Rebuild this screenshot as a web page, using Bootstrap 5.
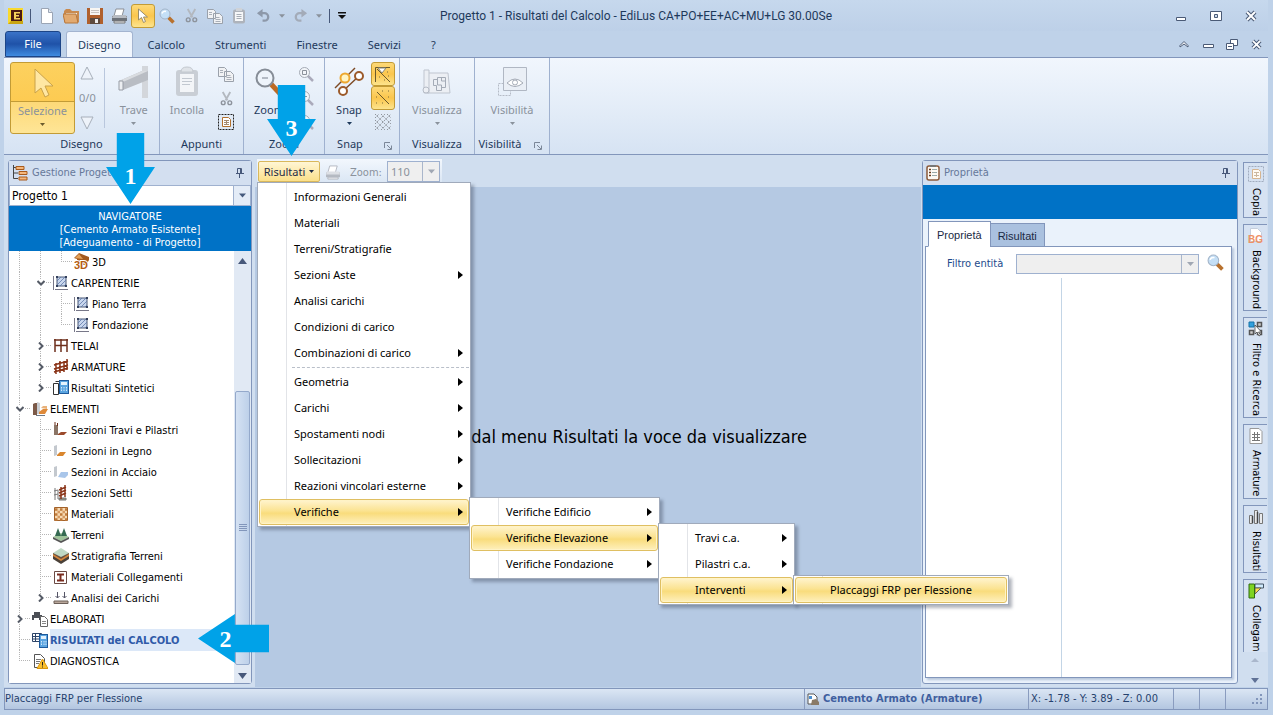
<!DOCTYPE html>
<html lang="it">
<head>
<meta charset="utf-8">
<meta name="viewport" content="width=device-width, initial-scale=1">
<title>Progetto 1 - Risultati del Calcolo - EdiLus</title>
<link rel="stylesheet" href="https://cdn.jsdelivr.net/npm/bootstrap@5.3.0/dist/css/bootstrap.min.css">
<style>
  :root { --line:#8296bb; --blue:#0072c6; --call:#00a2e8; --ink:#1e395b; --tahoma:"DejaVu Sans Condensed","DejaVu Sans",sans-serif; }
  body { font:11px/16px "Noto Sans",sans-serif; color:var(--ink); background:#bfd2e9; padding:0 5px 5px 4px; }
  button, select, input { font:inherit; color:inherit; }
  svg { display:block; flex:none; }
  .plain { border:0; background:none; padding:0; display:flex; align-items:center; justify-content:center; }
  .off { color:#8a929c; }
  .tah { font-family:var(--tahoma); }
  .titlebar, .tabrow, .ribbon, .status { flex:none; }

  .titlebar { display:grid; grid-template-columns:1fr auto 1fr; align-items:center; height:31px; background:linear-gradient(#c6d8ed,#bdd0e8); }
  .titlebar h1 { font:12px/16px Roboto,sans-serif; margin:0; }
  .qat .plain { width:24px; height:24px; }
  .qat .narrow { width:13px; }
  .gold { background:linear-gradient(#fdd978,#fbc64d 50%,#fde48d)!important; border:1px solid #c29b36!important; border-radius:3px; }
  .vbar { width:1px; height:14px; background:#46587a; }
  .winbtn .plain { width:35px; height:24px; }

  .tabrow { height:26px; }
  .tabrow .nav-link { color:var(--ink); padding:6px 15px 4px; line-height:16px; border-radius:3px 3px 0 0; }
  .tabrow .filetab { color:#fff; background:linear-gradient(#3a73c8,#1f52a8 50%,#3f8be0); border:1px solid #1c4587; padding:4px 0; width:56px; height:26px; margin:0 5px 0 1px; }
  .tabrow .current { background:#f1f6fd; border:1px solid #a3b4d0; border-bottom:0; padding:5px 11px; height:27px; }
  .mdi .plain { width:24px; height:20px; }

  .ribbon { height:98px; border:1px solid var(--line); border-width:1px 0; background:linear-gradient(#f1f6fd,#e4edf8 50%,#d6e3f3); }
  .rgroup { border-right:1px solid #9fb1cf; position:relative; display:flex; flex-direction:column; }
  .rbody { height:76px; display:flex; padding-top:4px; }
  .rname { text-align:center; line-height:16px; padding-top:2px; }
  .g-draw { width:156px; } .g-clip { width:84px; } .g-zoom { width:81px; } .g-std { width:75px; }
  .g-draw .rbody { padding-left:6px; }
  .launch .rname { padding-right:24px; }
  .launch .corner { position:absolute; right:7px; bottom:4px; }
  .big { border:0; background:none; padding:0; display:flex; flex-direction:column; align-items:center; width:58px; height:72px; }
  .g-clip .big { width:54px; }
  .g-zoom .big { width:50px; }
  .big svg.pic { margin:4px 0; }
  .split { width:65px; flex:none; padding:0; background:linear-gradient(#fcd15f,#fdcb52 38px,#c29b36 38px,#c29b36 39px,#fdd978 39px,#fee596)!important; }
  .small3 { display:flex; flex-direction:column; width:24px; }
  .small3 .plain { width:24px; height:24px; }
  .rsep { width:1px; height:60px; margin:6px 4px; background:#b9c7dd; }

  .workspace { background:#d0deef; min-height:0; }
  .pane { border:1px solid var(--line); border-radius:3px; background:#eaf2fb; display:flex; flex-direction:column; }
  .pane-left { width:244px; margin:5px 3px 3px 4px; }
  .pane-right { width:316px; margin:5px 5px 3px 1px; }
  .panehead { height:24px; background:#d3dff0; color:#66789a; padding:0 7px 0 3px; position:relative; display:flex; align-items:center; gap:4px; font-family:var(--tahoma); }
  .combo { appearance:none; border:1px solid #9fb1cf; border-radius:0; background:#fff url("data:image/svg+xml,%3Csvg xmlns='http://www.w3.org/2000/svg' width='17' height='22'%3E%3Cpath fill='%23e4ecf7' d='M0 0h17v22H0z'/%3E%3Cpath stroke='%239fb1cf' d='M.5 0v22'/%3E%3Cpath fill='%23465a7d' d='M6 9h7l-3.500 4z'/%3E%3C/svg%3E") right center no-repeat; }
  .combo.dim { background-image:url("data:image/svg+xml,%3Csvg xmlns='http://www.w3.org/2000/svg' width='17' height='22'%3E%3Cpath stroke='%23a9b6cb' d='M.5 0v22'/%3E%3Cpath fill='%23a0a7b3' d='M6 9h7l-3.500 4z'/%3E%3C/svg%3E"); background-color:#efefef; opacity:1; color:#8a929c; }
  .combo-project { height:21px; width:100%; font:12px/18px var(--tahoma); color:#000; padding:0 20px 0 2px; }
  .navhead { background:var(--blue); color:#fff; text-align:center; line-height:13px; padding:4px 0 2px; font-family:var(--tahoma); }
  .banner { background:var(--blue); height:34px; flex:none; }

  .tree { background:#fff; color:#000; font-family:var(--tahoma); }
  .tree .rowline { display:flex; align-items:center; height:21px; white-space:nowrap; color:#000; text-decoration:none; }
  .tree .rowline i { width:21px; height:21px; flex:none; display:flex; align-items:center; justify-content:center; --d:#b5b5b5; }
  .tree .v { background:repeating-linear-gradient(var(--d) 0 1px,#fff 1px 2px) 10px 0/1px 100% no-repeat; }
  .tree .t { background:repeating-linear-gradient(var(--d) 0 1px,#fff 1px 2px) 10px 0/1px 100% no-repeat, repeating-linear-gradient(90deg,var(--d) 0 1px,#fff 1px 2px) 10px 10px/11px 1px no-repeat; }
  .tree .l { background:repeating-linear-gradient(var(--d) 0 1px,#fff 1px 2px) 10px 0/1px 10px no-repeat, repeating-linear-gradient(90deg,var(--d) 0 1px,#fff 1px 2px) 10px 10px/11px 1px no-repeat; }
  .tree .rowline > svg { margin:0 2px; }
  .tree .rowline .chev { background:#fff; }
  .tree .rowline span { line-height:21px; padding-top:1px; }
  .tree .chosen { font-weight:700; color:#2f5aa8; }
  .tree .chosen span { background:#dce8f8; flex:1; }
  .sbar { width:17px; background:#e1e9f4; display:flex; flex-direction:column; align-items:center; padding:3px 0 4px; }
  .sbar .thumb { width:15px; height:274px; margin-top:auto; border:1px solid #94a9cb; border-radius:2px; background:linear-gradient(90deg,#d5e2f3,#bdd0e9); display:flex; align-items:center; justify-content:center; }

  .toolstrip { height:32px; padding:4px 0 0 2px; }
  .toolstrip .inner { background:linear-gradient(#f2f7fd,#dae6f4); height:24px; padding:2px 2px 0 1px; width:185px; gap:5px; }
  .btn-results { width:62px; height:21px; border:1px solid #d9b85c; border-radius:2px; background:linear-gradient(#fff6d5,#fbe08a); color:#1e2b45; display:flex; align-items:center; justify-content:center; gap:4px; padding:0; }
  .combo-zoom { width:53px; height:21px; padding:0 18px 0 3px; }
  .canvas { background:#b5c9e3; color:#000; font:18px/24px var(--tahoma); padding-right:114px; }

  .dropdown-menu.flyout { --bs-dropdown-item-padding-y:0; font-size:11px; color:#000; min-width:0; width:214px; padding:1px; border:1px solid #a0aabb; border-radius:0; box-shadow:3px 3px 3px rgba(60,70,90,.4); margin:0; background:linear-gradient(#e2e4e8,#e2e4e8) 28px 0/1px 100% no-repeat #fff; }
  .dropdown-menu.menu-main { top:21px; left:-1px; }
  .flyout .dropdown-item { display:flex; align-items:center; justify-content:space-between; height:26px; padding:0 6px 0 35px; color:#000; background:none; border-radius:3px; line-height:16px; }
  .flyout .dropdown-item.hot { border:1px solid #dfbf62; padding:0 5px 0 34px; background:linear-gradient(#fff4cf,#fbe391 45%,#f9dc7c 55%,#fef0bd); box-shadow:inset 0 0 0 1px #fff3c6; }
  .flyout .flyout { top:-2px; left:210px; width:191px; }
  .flyout .flyout .flyout { left:187px; width:137px; }
  .flyout .flyout .flyout .flyout { left:133px; width:216px; }
  .flyout hr { margin:1px 0 1px 33px; border-top:1px dashed #b9bfc9; opacity:1; }

  .ptabs { padding:2px 0 0 6px; margin-bottom:-1px; position:relative; height:28px; align-items:flex-end; font-family:"Liberation Sans",sans-serif; }
  .ptabs .nav-link { border:1px solid var(--line); border-radius:0; color:#1b2a44; padding:3px 7px; height:24px; background:#aac1df; line-height:18px; margin-left:-1px; }
  .ptabs .active { height:26px; background:#fff; border-bottom-color:#fff; padding:4px 8px; }
  .psheet { background:#fff; border:1px solid var(--line); margin:0 5px 5px 2px; color:#1d4a8c; font-family:var(--tahoma); box-shadow:2px 2px 2px #b9c7dc; }
  .combo-filter { height:20px; min-width:0; }
  .filterrow { padding:7px 7px 4px 21px; height:31px; }
  .filterrow label { line-height:20px; margin-right:13px; }
  .psplit { width:136px; border-right:1px solid #c3d5e6; }

  .side { width:24px; gap:6px; margin-right:1px; padding-top:7px; font-family:var(--tahoma); color:#000; }
  .side .stab { writing-mode:vertical-rl; white-space:nowrap; border:1px solid var(--line); border-right:0; background:#d6e2f2; padding:3px 0 1px; display:flex; align-items:center; gap:6px; width:24px; line-height:16px; color:#000; }
  .side .stab svg { writing-mode:horizontal-tb; }

  .status { height:22px; margin-top:1px; border:1px solid var(--line); background:linear-gradient(#dbe6f4,#b3c6e0); color:#26426e; font-family:var(--tahoma); }
  .status .cell { border-left:1px solid #8a9cbf; height:20px; display:flex; align-items:center; padding-left:2px; }
  .cell-mode { width:224px; color:#3f5f9f; } .cell-pos { width:145px; } .cell-x { width:26px; } .cell-grip { width:42px; }

  .callout { position:absolute; z-index:1100; background:var(--call); color:#fff; font:700 24px/24px "Liberation Serif",serif; display:flex; align-items:center; justify-content:center; pointer-events:none; }
  .callout.down { width:49px; height:71px; padding-top:14px; clip-path:polygon(22% 0,78% 0,78% 48%,100% 48%,50% 100%,0 48%,22% 48%); }
  .callout.left { width:71px; height:49px; padding-right:16px; clip-path:polygon(0 50%,52% 0,52% 22%,100% 22%,100% 78%,52% 78%,52% 100%); }
  .call-1 { left:97px; top:-28px; }
  .call-2 { left:189px; top:-15px; }
  .call-3 { left:9px; top:-76px; }
</style>
<script src="https://cdn.jsdelivr.net/npm/bootstrap@5.3.0/dist/js/bootstrap.bundle.min.js"></script>
</head>
<body class="d-flex flex-column vh-100">

<svg width="0" height="0" class="position-absolute" aria-hidden="true">
  <symbol id="caret" viewBox="0 0 7 4"><path d="M0 0h7L3.500 4z" fill="currentColor"/></symbol>
  <symbol id="right" viewBox="0 0 5 8"><path d="M0 0l5 4-5 4z" fill="#000"/></symbol>
  <symbol id="pin" viewBox="0 0 8 10"><path d="M1.500 .5h4v5h-4zM4.500 1v4M0 5.500h8M3.500 6v4" fill="none" stroke="#47587a"/></symbol>
  <symbol id="chr" viewBox="0 0 8 8"><path d="M2 .5L5.500 4 2 7.500" fill="none" stroke="#555b66" stroke-width="2"/></symbol>
  <symbol id="chd" viewBox="0 0 8 8"><path d="M.5 2L4 5.500 7.500 2" fill="none" stroke="#555b66" stroke-width="2"/></symbol>
  <symbol id="lens" viewBox="0 0 16 16"><path d="M9.500 9.500l5 5" stroke="#b8712e" stroke-width="3.500"/><circle cx="6" cy="6" r="5" fill="#c4dff6" stroke="#a3b4c8"/><path d="M3 5.500a3 3 0 0 1 4-2" stroke="#fff" stroke-width="1.500" fill="none"/></symbol>
  <symbol id="cut" viewBox="0 0 16 16"><path d="M4 1l5 9M12 1l-5 9" stroke="#b3b8bf" stroke-width="2"/><circle cx="4.500" cy="12.500" r="2" fill="none" stroke="#8d939c" stroke-width="1.500"/><circle cx="11.500" cy="12.500" r="2" fill="none" stroke="#8d939c" stroke-width="1.500"/></symbol>
  <symbol id="copy" viewBox="0 0 16 16"><path d="M.5 1.500h6l2 2v7h-8zM6.500 5.500h6l3 3v7h-9z" fill="#f1f2f4" stroke="#9aa1ab"/><path d="M2 4.500h3M2 6.500h3M8.500 9.500h4M8.500 11.500h5M8.500 13.500h5" stroke="#a9afb8"/></symbol>
  <symbol id="clip" viewBox="0 0 16 16"><rect x="2" y="1.500" width="12" height="14" rx="2" fill="#aeb3bb"/><path d="M4 4h8v9H4z" fill="#f6f7f8"/><path d="M5 0h6v3H5z" fill="#cfd3d8"/><path d="M5.500 6.500h5M5.500 8.500h5M5.500 10.500h5" stroke="#a7adb6"/></symbol>
  <symbol id="undo" viewBox="0 0 16 16"><path d="M3 5.500h6a4 4 0 0 1 0 8H7" fill="none" stroke="#8d98a9" stroke-width="2.500"/><path d="M1 5.500L7 1v9z" fill="#8d98a9"/></symbol>
  <symbol id="plan" viewBox="0 0 16 16"><path d="M.5 1v14M2 14.500h13" stroke="#778"/><path d="M4 2h9v9H4z" fill="#c9d7ee" stroke="#4a5875"/><path d="M4 6l4-4M4 10l8-8M7 11l6-6M11 11l2-2" stroke="#5f78a8" stroke-width=".8"/><path d="M3 1h2v2H3zM12 1h2v2h-2zM3 10h2v2H3zM12 10h2v2h-2z" fill="#33405c"/></symbol>
  <symbol id="calc" viewBox="0 0 16 16"><path d="M.5 3.500h5v11h-5zM2.500 1.500h6v12" fill="#fff" stroke="#333"/><rect x="6.500" y=".5" width="9" height="13" fill="#5aa4e0" stroke="#1e5a9c"/><path d="M8 2h6v3H8z" fill="#e4f2fd"/><path d="M8.500 7v5M11 7v5M13.500 7v5" stroke="#d4e9fb" stroke-dasharray="1.500 1"/></symbol>
  <symbol id="corner" viewBox="0 0 8 8"><path d="M.5 6V.5H6M3 3l4 4M7.500 3.500v4h-4" fill="none" stroke="#7b8798"/></symbol>
</svg>

<header class="titlebar">
  <div class="qat d-flex align-items-center">
    <svg width="18" height="18" viewBox="0 0 18 18" class="ms-1"><path d="M0 1h15v16H0z" fill="#f9d92e"/><path d="M0 17l3-3h12v3z" fill="#c9a512"/><path d="M3 3h11v11H3z" fill="#4a1a12"/><path d="M6 5h6v1.500H8v1.500h3v1.500H8V11h4v1.500H6z" fill="#f6d25a"/></svg>
    <span class="vbar ms-1 me-1"></span>
    <button class="plain" aria-label="Nuovo"><svg width="14" height="16" viewBox="0 0 14 16"><path d="M1.500 .5h7l4 4v11h-11z" fill="#fff" stroke="#9ba5b5"/><path d="M8.500 .5v4h4" fill="#dfe5ee" stroke="#9ba5b5"/></svg></button>
    <button class="plain" aria-label="Apri"><svg width="17" height="16" viewBox="0 0 17 16"><path d="M1 3l2-2h4l2 2h7v11H1z" fill="#c98a4e"/><path d="M3 5h11v3H3z" fill="#f5efe4"/><path d="M0 6h13l2 9H2z" fill="#e2aa70" stroke="#b6763b"/></svg></button>
    <button class="plain" aria-label="Salva"><svg width="16" height="16" viewBox="0 0 16 16"><path d="M0 0h16v16H0z" fill="#b0602c"/><path d="M3 0h10v7H3z" fill="#f8f6f3"/><path d="M4 2.500h8M4 4.500h8" stroke="#c9c5c0"/><path d="M3 10h10v6H3z" fill="#5c4a3e"/><path d="M8 11h3v4H8z" fill="#eee"/></svg></button>
    <button class="plain" aria-label="Stampa"><svg width="17" height="16" viewBox="0 0 17 16"><path d="M5 1h8l-2 7H3z" fill="#fff" stroke="#8b8f96"/><path d="M1 8h15v5H1z" fill="#6c7179"/><path d="M2 7h13l1 3H1z" fill="#b7bbc2"/><path d="M3 13h11v2H3z" fill="#e8eaed" stroke="#777"/></svg></button>
    <button class="plain gold" aria-label="Seleziona"><svg width="12" height="16" viewBox="0 0 12 16"><path d="M1.500 1v11l3-2.500 2 5 2-1-2-4.500h4z" fill="#fff" stroke="#9a8d6b"/></svg></button>
    <button class="plain" aria-label="Cerca"><svg width="16" height="16"><use href="#lens"/></svg></button>
    <button class="plain" aria-label="Taglia"><svg width="15" height="15"><use href="#cut"/></svg></button>
    <button class="plain" aria-label="Copia"><svg width="16" height="16"><use href="#copy"/></svg></button>
    <button class="plain" aria-label="Incolla"><svg width="16" height="16"><use href="#clip"/></svg></button>
    <button class="plain" aria-label="Annulla"><svg width="15" height="15"><use href="#undo"/></svg></button>
    <button class="plain narrow off" aria-label="Elenco annulla"><svg width="6" height="4"><use href="#caret"/></svg></button>
    <button class="plain" aria-label="Ripeti"><svg width="15" height="15" viewBox="0 0 16 16"><path d="M13 5.500H7a4 4 0 0 0 0 8h2" fill="none" stroke="#a3abb8" stroke-width="2.500"/><path d="M15 5.500L9 1v9z" fill="#a3abb8"/></svg></button>
    <button class="plain narrow off" aria-label="Elenco ripeti"><svg width="6" height="4"><use href="#caret"/></svg></button>
    <span class="vbar ms-1"></span>
    <button class="plain" aria-label="Personalizza"><svg width="8" height="7" viewBox="0 0 8 7"><path d="M0 0h8v1.500H0zM0 3h8L4 7z" fill="#111"/></svg></button>
  </div>
  <h1>Progetto 1 - Risultati del Calcolo - EdiLus CA+PO+EE+AC+MU+LG 30.00Se</h1>
  <div class="winbtn d-flex justify-content-end">
    <button class="plain" aria-label="Riduci"><svg width="12" height="12" viewBox="0 0 12 12"><path d="M1.500 7.500h9v3h-9z" fill="#fff" stroke="#4a5a76"/></svg></button>
    <button class="plain" aria-label="Ripristina"><svg width="12" height="12" viewBox="0 0 12 12"><path d="M.5 1.500h11v9H.5z" fill="#fff" stroke="#4a5a76"/><path d="M4.500 4.500h3v3h-3z" fill="#cddcef" stroke="#4a5a76"/></svg></button>
    <button class="plain" aria-label="Chiudi"><svg width="12" height="12" viewBox="0 0 12 12"><path d="M2 2l8 8M10 2l-8 8" stroke="#4a5a76" stroke-width="4"/><path d="M2 2l8 8M10 2l-8 8" stroke="#fff" stroke-width="2"/></svg></button>
  </div>
</header>

<nav class="tabrow nav flex-nowrap">
  <button class="filetab nav-link">File</button>
  <a class="nav-link current" href="#">Disegno</a>
  <a class="nav-link" href="#">Calcolo</a>
  <a class="nav-link" href="#">Strumenti</a>
  <a class="nav-link" href="#">Finestre</a>
  <a class="nav-link" href="#">Servizi</a>
  <a class="nav-link" href="#">?</a>
  <div class="mdi d-flex ms-auto align-items-center">
    <button class="plain" aria-label="Comprimi"><svg width="10" height="8" viewBox="0 0 10 8"><path d="M1 5.500L5 1.500l4 4v1.500L5 4 1 7z" fill="#fff" stroke="#4a5a76"/></svg></button>
    <button class="plain" aria-label="Riduci finestra"><svg width="11" height="10" viewBox="0 0 11 10"><path d="M.5 5.500h10v3H.5z" fill="#fff" stroke="#4a5a76"/></svg></button>
    <button class="plain" aria-label="Ripristina finestra"><svg width="12" height="11" viewBox="0 0 12 11"><path d="M4.500 .5h7v6h-7z" fill="#fff" stroke="#4a5a76"/><path d="M.5 4.500h7v6h-7z" fill="#fff" stroke="#4a5a76"/><path d="M2 7.500h4" stroke="#4a5a76"/></svg></button>
    <button class="plain" aria-label="Chiudi finestra"><svg width="11" height="11" viewBox="0 0 12 12"><path d="M2 2l8 8M10 2l-8 8" stroke="#4a5a76" stroke-width="4"/><path d="M2 2l8 8M10 2l-8 8" stroke="#fff" stroke-width="2"/></svg></button>
  </div>
</nav>

<section class="ribbon d-flex">
  <div class="rgroup g-draw">
    <div class="rbody">
      <button class="big split gold off"><svg class="pic" width="32" height="32" viewBox="0 0 32 32"><path d="M8 2v24l6-5 4 9 4-2-4-9h8z" fill="#ffe7a3" stroke="#c9a24a"/></svg>Selezione<svg width="5" height="3" class="mt-1" color="#6b5b2c"><use href="#caret"/></svg></button>
      <div class="d-flex flex-column align-items-center justify-content-between off py-1 px-1">
        <svg width="14" height="14" viewBox="0 0 14 14"><path d="M7 1l6 12H1z" fill="#eef3fa" stroke="#a7afba"/></svg>
        <span>0/0</span>
        <svg width="14" height="14" viewBox="0 0 14 14"><path d="M7 13L1 1h12z" fill="#eef3fa" stroke="#a7afba"/></svg>
      </div>
      <div class="rsep"></div>
      <button class="big off"><svg class="pic" width="32" height="32" viewBox="0 0 32 32"><path d="M24 0h6v32h-6z" fill="#d3d6db"/><path d="M1 15L24 5l6 0v9L5 24l-4-1z" fill="#b9bdc4"/><path d="M1 15L24 5h6L5 16z" fill="#d9dce0"/><path d="M1 15h4v9H1z" fill="#eceef1" stroke="#979ca5"/></svg>Trave<svg width="5" height="3" class="mt-1"><use href="#caret"/></svg></button>
    </div>
    <div class="rname">Disegno</div>
  </div>
  <div class="rgroup g-clip">
    <div class="rbody">
      <button class="big off"><svg class="pic" width="30" height="32" viewBox="0 0 30 32"><rect x="4" y="4" width="22" height="26" rx="3" fill="#c9ced5"/><path d="M8 8h14v18H8z" fill="#f3f5f8"/><path d="M9 6q0-5 6-5t6 5z" fill="#dfe3e8" stroke="#c3c8cf"/><path d="M10 12.500h10M10 15.500h10M10 18.500h8" stroke="#c2c8d0"/></svg>Incolla</button>
      <div class="small3">
        <button class="plain" aria-label="Copia"><svg width="16" height="16"><use href="#copy"/></svg></button>
        <button class="plain" aria-label="Taglia"><svg width="15" height="15"><use href="#cut"/></svg></button>
        <button class="plain" aria-label="Seleziona area"><svg width="16" height="16" viewBox="0 0 16 16"><path d="M.5 .5h15v15H.5z" fill="none" stroke="#222" stroke-dasharray="2 1"/><path d="M4.500 3.500h6l2 2v7h-8z" fill="#fff" stroke="#b3712e"/><path d="M6 6.500h5M6 8.500h5M6 10.500h5M8.500 6v5" stroke="#a38a70"/></svg></button>
      </div>
    </div>
    <div class="rname">Appunti</div>
  </div>
  <div class="rgroup g-zoom">
    <div class="rbody">
      <button class="big"><svg class="pic" width="32" height="32" viewBox="0 0 32 32"><path d="M18 18l12 13" stroke="#bd6a24" stroke-width="5"/><circle cx="12" cy="12" r="8.500" fill="#eef4fb" stroke="#868d97" stroke-width="2"/><path d="M9 12h6" stroke="#b3bac4" stroke-width="2"/></svg>Zoom</button>
      <div class="small3">
        <button class="plain" aria-label="Zoom finestra"><svg width="16" height="16" viewBox="0 0 16 16"><path d="M10 10l5 5" stroke="#aab" stroke-width="2.500"/><circle cx="6.500" cy="6.500" r="5" fill="#f2f5f9" stroke="#a5abb5"/><path d="M4.500 4.500h4v4h-4z" fill="none" stroke="#8b919b"/></svg></button>
        <button class="plain" aria-label="Zoom tutto"><svg width="16" height="16" viewBox="0 0 16 16"><path d="M10 10l5 5" stroke="#aab" stroke-width="2.500"/><circle cx="6.500" cy="6.500" r="5" fill="#f2f5f9" stroke="#a5abb5"/><path d="M4 6.500h5M6.500 4v5" stroke="#8b919b"/></svg></button>
        <button class="plain" aria-label="Zoom precedente"><svg width="16" height="16" viewBox="0 0 16 16"><path d="M10 10l5 5" stroke="#aab" stroke-width="2.500"/><circle cx="6.500" cy="6.500" r="5" fill="#f2f5f9" stroke="#a5abb5"/><path d="M4 6.500h5" stroke="#8b919b"/></svg></button>
      </div>
    </div>
    <div class="rname">Zoom</div>
  </div>
  <div class="rgroup g-std launch">
    <div class="rbody justify-content-between pe-1">
      <button class="big w-auto ms-2"><svg class="pic" width="32" height="32" viewBox="0 0 32 32"><path d="M2 22L22 2" stroke="#7d4a24" stroke-width="1.500"/><path d="M10 25L26 10" stroke="#7d4a24" stroke-width="1.500"/><circle cx="12" cy="12" r="4.500" fill="#fff4c4" stroke="#eda72f" stroke-width="2"/><circle cx="26" cy="10" r="4" fill="#fff" stroke="#9c5a2a" stroke-width="2"/><circle cx="10" cy="25" r="4" fill="#fff" stroke="#9c5a2a" stroke-width="2"/></svg>Snap<svg width="5" height="3" class="mt-1"><use href="#caret"/></svg></button>
      <div class="small3">
        <button class="plain gold" aria-label="Snap estremi"><svg width="18" height="18" viewBox="0 0 18 18"><path d="M1.500 17V2.500H16M3 4l13 13" fill="none" stroke="#6b5a2c"/><path d="M4 3h8L8 8z" fill="#fff" stroke="#887"/><path d="M13 7h1M10 15h1M5 12h1M14 11h1" stroke="#7a6a3a"/></svg></button>
        <button class="plain gold" aria-label="Snap griglia"><svg width="18" height="18" viewBox="0 0 18 18"><path d="M3 3l12 12" stroke="#6b5a2c"/><path d="M2 8h1M2 14h1M8 2h1M14 2h1M14 8h1M8 14h1" stroke="#7a6a3a"/></svg></button>
        <button class="plain" aria-label="Griglia"><svg width="17" height="17" viewBox="0 0 17 17"><path d="M0 4l4-4M0 10L10 0M0 16L16 0M6 16L16 6M12 16l4-4M0 12l4 4M0 6l10 10M0 0l16 16M6 0l10 10M12 0l4 4" stroke="#8f949c" stroke-dasharray="1.500 1"/></svg></button>
      </div>
    </div>
    <div class="rname">Snap</div>
    <svg class="corner" width="8" height="8"><use href="#corner"/></svg>
  </div>
  <div class="rgroup g-std">
    <div class="rbody justify-content-center">
      <button class="big off"><svg class="pic" width="32" height="32" viewBox="0 0 32 32"><path d="M3 4h5v23H3zM8 7h19l2 20H6" fill="#eceff4" stroke="#bfc5cf"/><circle cx="5" cy="24" r="3" fill="#eceff4" stroke="#b5bbc6"/><path d="M12.500 13.500h4v-2h8v10h-4v3h-5v-5h-3zM16.500 13v6h4v5M20.500 11v4h4" fill="none" stroke="#a4abb6"/></svg>Visualizza<svg width="5" height="3" class="mt-1"><use href="#caret"/></svg></button>
    </div>
    <div class="rname">Visualizza</div>
  </div>
  <div class="rgroup g-std launch">
    <div class="rbody justify-content-center">
      <button class="big off"><svg class="pic" width="32" height="32" viewBox="0 0 32 32"><path d="M2.500 17.500h12v12h-12z" fill="none" stroke="#b5bbc6" stroke-dasharray="2 1"/><path d="M7.500 1.500h23v23h-23z" fill="#eaeff6" stroke="#b0b7c3"/><path d="M11 17q8-8 16 0q-8 7-16 0z" fill="#fff" stroke="#a4abb6"/><circle cx="19" cy="16.500" r="2.500" fill="none" stroke="#a4abb6"/></svg>Visibilità<svg width="5" height="3" class="mt-1"><use href="#caret"/></svg></button>
    </div>
    <div class="rname">Visibilità</div>
    <svg class="corner" width="8" height="8"><use href="#corner"/></svg>
  </div>
</section>

<main class="workspace d-flex flex-grow-1">
  <aside class="pane pane-left">
    <div class="panehead">
      <svg width="16" height="16" viewBox="0 0 16 16"><path d="M1.500 0v13.500H6M1.500 2.500H4M1.500 8H6" fill="none" stroke="#444"/><path d="M4 1.500h8v3H4zM7 6.500h8v3H7zM7 12h8v3H7z" fill="#f5b77c" stroke="#a85a1c"/></svg>
      <span>Gestione Progetto</span>
      <button class="plain ms-auto" aria-label="Blocca pannello"><svg width="8" height="10"><use href="#pin"/></svg></button>
      <div class="callout down call-1">1</div>
    </div>
    <select class="combo combo-project" aria-label="Progetto"><option>Progetto 1</option></select>
    <div class="navhead">NAVIGATORE<br>[Cemento Armato Esistente]<br>[Adeguamento - di Progetto]</div>
    <div class="d-flex flex-grow-1">
      <div class="tree flex-grow-1">
        <a class="rowline" href="#"><i class="v"></i><i class="v"></i><i class="l"></i><svg width="16" height="18" viewBox="0 0 16 18"><path d="M0 5l5-5 10 4v3l-3 5H3V6z" fill="#a35a1e"/><path d="M1 5l4-4 4 5" fill="#e2a05a"/><text x="0" y="16" font-family="Liberation Sans" font-weight="700" font-size="11" fill="#b55d12" stroke="#fff" stroke-width="2" paint-order="stroke">3D</text></svg><span>3D</span></a>
        <a class="rowline" href="#"><i class="v"></i><i class="t"><svg class="chev" width="8" height="8"><use href="#chd"/></svg></i><svg width="16" height="16"><use href="#plan"/></svg><span>CARPENTERIE</span></a>
        <a class="rowline" href="#"><i class="v"></i><i class="v"></i><i class="t"></i><svg width="16" height="16"><use href="#plan"/></svg><span>Piano Terra</span></a>
        <a class="rowline" href="#"><i class="v"></i><i class="v"></i><i class="l"></i><svg width="16" height="16"><use href="#plan"/></svg><span>Fondazione</span></a>
        <a class="rowline" href="#"><i class="v"></i><i class="t"><svg class="chev" width="8" height="8"><use href="#chr"/></svg></i><svg width="16" height="16" viewBox="0 0 16 16"><path d="M2 1v13M8 1v13M14 1v13M1 2h14M2 7.500h12" stroke="#6e2f1c" stroke-width="1.500"/></svg><span>TELAI</span></a>
        <a class="rowline" href="#"><i class="v"></i><i class="t"><svg class="chev" width="8" height="8"><use href="#chr"/></svg></i><svg width="16" height="16" viewBox="0 0 16 16"><path d="M3 4v11M7 2v12M11 2v11M14 0v11M1 6l14-4M1 10l14-4M1 13l14-4" stroke="#8a3418" stroke-width="1.500"/></svg><span>ARMATURE</span></a>
        <a class="rowline" href="#"><i class="v"></i><i class="l"><svg class="chev" width="8" height="8"><use href="#chr"/></svg></i><svg width="16" height="16"><use href="#calc"/></svg><span>Risultati Sintetici</span></a>
        <a class="rowline" href="#"><i class="t"><svg class="chev" width="8" height="8"><use href="#chd"/></svg></i><svg width="16" height="16" viewBox="0 0 16 16"><path d="M1 3l2-1v12H1zM3 2h2v12H3z" fill="#7c5a48"/><path d="M5 1l3 1v11H5z" fill="#c9cdd2"/><path d="M7 11l4-3h5l-3 5H7z" fill="#df8a3a"/><path d="M9 7l2-2h4v3z" fill="#e9b27a"/><path d="M4 14h9v1H4z" fill="#6f7a88"/></svg><span>ELEMENTI</span></a>
        <a class="rowline" href="#"><i class="v"></i><i class="t"></i><svg width="16" height="16" viewBox="0 0 16 16"><path d="M1 3h4v10H1z" fill="#8b7566"/><path d="M2 0v3M4.500 1v3" stroke="#6b2d18"/><path d="M5 12l3-2h6l-3 3H5z" fill="#9b4a2c"/></svg><span>Sezioni Travi e Pilastri</span></a>
        <a class="rowline" href="#"><i class="v"></i><i class="t"></i><svg width="16" height="16" viewBox="0 0 16 16"><path d="M1 3l3-1v10l-3 1z" fill="#c3c8ce"/><path d="M4 12l3-3h6l-3 4H4z" fill="#d9862e"/></svg><span>Sezioni in Legno</span></a>
        <a class="rowline" href="#"><i class="v"></i><i class="t"></i><svg width="16" height="16" viewBox="0 0 16 16"><path d="M1 3l3-1v10l-3 1z" fill="#c3c8ce"/><path d="M5 13l3-5h7v3l-3 3z" fill="#a9c6ea"/></svg><span>Sezioni in Acciaio</span></a>
        <a class="rowline" href="#"><i class="v"></i><i class="t"></i><svg width="16" height="16" viewBox="0 0 16 16"><path d="M2 3v12M5 5v9M1 6l4-1M1 10l4-1M6 13h7v2H6z" stroke="#777" fill="#998"/><path d="M8 2v12M12 0v12M6 5l7-3M6 8l7-3M6 11l7-3" stroke="#8a3418" stroke-width="1.500"/></svg><span>Sezioni Setti</span></a>
        <a class="rowline" href="#"><i class="v"></i><i class="t"></i><svg width="16" height="16" viewBox="0 0 16 16"><path d="M1.500 1.500h13v13h-13z" fill="#f6d9b3" stroke="#a3622a"/><path d="M2 3.500h12M2 8.500h12M2 13.500h12" stroke="#c07a3a" stroke-width="2.500" stroke-dasharray="2.500 2.500"/><path d="M4.500 6h10M4.500 11h10" stroke="#d59a62" stroke-width="2.500" stroke-dasharray="2.500 2.500"/></svg><span>Materiali</span></a>
        <a class="rowline" href="#"><i class="v"></i><i class="t"></i><svg width="16" height="16" viewBox="0 0 16 16"><path d="M0 10l8-4 8 4-8 4z" fill="#9fc39a"/><path d="M0 10l8 4 8-4v2l-8 4-8-4z" fill="#555"/><path d="M5 1L2 9h6zM11 1L8 9h6z" fill="#356a52"/></svg><span>Terreni</span></a>
        <a class="rowline" href="#"><i class="v"></i><i class="t"></i><svg width="16" height="16" viewBox="0 0 16 16"><path d="M0 11l8 5 8-5V8H0z" fill="#4a4038"/><path d="M0 8l8 5 8-5V6H0z" fill="#d4843a"/><path d="M0 6l8 5 8-5V5H0z" fill="#6a5240"/><path d="M0 5l8-5 8 5-8 4z" fill="#bfd8c4"/></svg><span>Stratigrafia Terreni</span></a>
        <a class="rowline" href="#"><i class="v"></i><i class="t"></i><svg width="16" height="16" viewBox="0 0 16 16"><path d="M1.500 2.500h12v12h-12z" fill="#fff" stroke="#6b4a44"/><path d="M4 5.500h7M4 11.500h7M7.500 5v7" stroke="#7a2d20" stroke-width="2"/></svg><span>Materiali Collegamenti</span></a>
        <a class="rowline" href="#"><i class="v"></i><i class="l"><svg class="chev" width="8" height="8"><use href="#chr"/></svg></i><svg width="16" height="16" viewBox="0 0 16 16"><path d="M4.500 2v6M11.500 2v6M2.500 6l2 2 2-2M9.500 6l2 2 2-2" fill="none" stroke="#556"/><path d="M1 11h14v2.500H1z" fill="#b9a79b" stroke="#6d6059"/></svg><span>Analisi dei Carichi</span></a>
        <a class="rowline" href="#"><i class="t"><svg class="chev" width="8" height="8"><use href="#chr"/></svg></i><svg width="16" height="16" viewBox="0 0 16 16"><path d="M2 1h6v3H2zM0 4h10v5H0z" fill="#4b4f56"/><path d="M2 7h5v2H2z" fill="#fff"/><path d="M8.500 5.500h4l3 3v7h-7z" fill="#fff" stroke="#666"/><path d="M10 10.500h4M10 12.500h4" stroke="#888"/></svg><span>ELABORATI</span></a>
        <a class="rowline chosen position-relative" href="#"><i class="t"></i><svg width="16" height="16" viewBox="0 0 16 16"><path d="M.5 1.500h9v8h-9zM0 4.500h9M0 7h9M3.500 1v8" fill="#fff" stroke="#2d4468"/><rect x="7.500" y="2.500" width="8" height="13" fill="#5aa4e0" stroke="#1e5a9c"/><path d="M9 4h5v3H9z" fill="#e4f2fd"/><path d="M9.500 9v5M12 9v5M14 9v5" stroke="#d4e9fb" stroke-dasharray="1.500 1"/></svg><span>RISULTATI del CALCOLO</span><div class="callout left call-2">2</div></a>
        <a class="rowline" href="#"><i class="l"></i><svg width="16" height="16" viewBox="0 0 16 16"><path d="M2.500 1.500h6l4 4v9h-10z" fill="#fff" stroke="#555"/><path d="M4 6.500h5M4 8.500h4M4 10.500h3" stroke="#777"/><path d="M10.500 6l5.500 9.500H5z" fill="#fbc02d" stroke="#d8960f"/><path d="M10.500 9v3.500M10.500 13.500v1" stroke="#222"/></svg><span>DIAGNOSTICA</span></a>
      </div>
      <div class="sbar">
        <svg width="9" height="6" viewBox="0 0 9 6" class="mt-1"><path d="M0 6h9L4.500 0z" fill="#47587a"/></svg>
        <div class="thumb"><svg width="8" height="8" viewBox="0 0 8 8"><path d="M0 .5h8M0 2.500h8M0 4.500h8M0 6.500h8" stroke="#8296bb"/></svg></div>
        <svg width="9" height="6" viewBox="0 0 9 6" class="mt-2"><path d="M0 0h9L4.500 6z" fill="#47587a"/></svg>
      </div>
    </div>
  </aside>

  <section class="flex-grow-1 d-flex flex-column">
    <div class="toolstrip">
      <div class="inner d-flex align-items-start">
        <div class="dropdown">
          <button class="btn-results" aria-expanded="true">Risultati<svg width="5" height="3"><use href="#caret"/></svg></button>
          <div class="callout down call-3">3</div>
          <ul class="dropdown-menu flyout menu-main show">
            <li><a class="dropdown-item" href="#">Informazioni Generali</a></li>
            <li><a class="dropdown-item" href="#">Materiali</a></li>
            <li><a class="dropdown-item" href="#">Terreni/Stratigrafie</a></li>
            <li><a class="dropdown-item" href="#">Sezioni Aste<svg width="5" height="8"><use href="#right"/></svg></a></li>
            <li><a class="dropdown-item" href="#">Analisi carichi</a></li>
            <li><a class="dropdown-item" href="#">Condizioni di carico</a></li>
            <li><a class="dropdown-item" href="#">Combinazioni di carico<svg width="5" height="8"><use href="#right"/></svg></a></li>
            <li><hr></li>
            <li><a class="dropdown-item" href="#">Geometria<svg width="5" height="8"><use href="#right"/></svg></a></li>
            <li><a class="dropdown-item" href="#">Carichi<svg width="5" height="8"><use href="#right"/></svg></a></li>
            <li><a class="dropdown-item" href="#">Spostamenti nodi<svg width="5" height="8"><use href="#right"/></svg></a></li>
            <li><a class="dropdown-item" href="#">Sollecitazioni<svg width="5" height="8"><use href="#right"/></svg></a></li>
            <li><a class="dropdown-item" href="#">Reazioni vincolari esterne<svg width="5" height="8"><use href="#right"/></svg></a></li>
            <li class="position-relative"><a class="dropdown-item hot" href="#">Verifiche<svg width="5" height="8"><use href="#right"/></svg></a>
              <ul class="dropdown-menu flyout show">
                <li><a class="dropdown-item" href="#">Verifiche Edificio<svg width="5" height="8"><use href="#right"/></svg></a></li>
                <li class="position-relative"><a class="dropdown-item hot" href="#">Verifiche Elevazione<svg width="5" height="8"><use href="#right"/></svg></a>
                  <ul class="dropdown-menu flyout show">
                    <li><a class="dropdown-item" href="#">Travi c.a.<svg width="5" height="8"><use href="#right"/></svg></a></li>
                    <li><a class="dropdown-item" href="#">Pilastri c.a.<svg width="5" height="8"><use href="#right"/></svg></a></li>
                    <li class="position-relative"><a class="dropdown-item hot" href="#">Interventi<svg width="5" height="8"><use href="#right"/></svg></a>
                      <ul class="dropdown-menu flyout show">
                        <li><a class="dropdown-item hot" href="#">Placcaggi FRP per Flessione</a></li>
                      </ul>
                    </li>
                  </ul>
                </li>
                <li><a class="dropdown-item" href="#">Verifiche Fondazione<svg width="5" height="8"><use href="#right"/></svg></a></li>
              </ul>
            </li>
          </ul>
        </div>
        <button class="plain mt-1" aria-label="Stampa"><svg width="16" height="15" viewBox="0 0 17 16"><path d="M5 1h8l-2 7H3z" fill="#fff" stroke="#b3b8c0"/><path d="M1 8h15v5H1z" fill="#b5bac2"/><path d="M2 7h13l1 3H1z" fill="#dde0e5"/><path d="M3 13h11v2H3z" fill="#f1f2f4" stroke="#b3b8c0"/></svg></button>
        <label class="off ms-1 mt-1 tah" for="zoom">Zoom:</label>
        <select id="zoom" class="combo dim combo-zoom ms-auto" disabled><option>110</option></select>
      </div>
    </div>
    <div class="canvas flex-grow-1 d-flex align-items-center justify-content-end"><span>dal menu Risultati la voce da visualizzare</span></div>
  </section>

  <aside class="pane pane-right">
    <div class="panehead">
      <svg width="14" height="16" viewBox="0 0 14 16"><rect x="1" y="1" width="12" height="14" rx="2" fill="#fdfaf5" stroke="#8b5a3a" stroke-width="1.500"/><path d="M3 4.500h2M3 7.500h2M3 10.500h2" stroke="#6b3a1c" stroke-width="1.500"/><path d="M6 4.500h5M6 7.500h5M6 10.500h5" stroke="#9aa"/><path d="M4 0h6v2H4z" fill="#777"/></svg>
      <span>Proprietà</span>
      <button class="plain ms-auto" aria-label="Blocca pannello"><svg width="8" height="10"><use href="#pin"/></svg></button>
    </div>
    <div class="banner"></div>
    <nav class="nav ptabs"><a class="nav-link active" href="#">Proprietà</a><a class="nav-link" href="#">Risultati</a></nav>
    <div class="psheet flex-grow-1 d-flex flex-column">
      <div class="filterrow d-flex align-items-start">
        <label for="filtro">Filtro entità</label>
        <select id="filtro" class="combo dim combo-filter flex-grow-1" disabled><option></option></select>
        <button class="plain ms-2" aria-label="Cerca entità"><svg width="17" height="17"><use href="#lens"/></svg></button>
      </div>
      <div class="psplit flex-grow-1"></div>
    </div>
  </aside>

  <nav class="side d-flex flex-column">
    <button class="stab"><svg width="16" height="16" viewBox="0 0 16 16"><path d="M.5 .5h15v15H.5z" fill="none" stroke="#a0acbf" stroke-dasharray="2 1"/><path d="M4.500 3.500h6l2 2v7h-8z" fill="#fffaf2" stroke="#d5b591"/><path d="M6 6.500h5M6 9.500h5M8.500 6v5" stroke="#cbb79f"/></svg><span>Copia</span></button>
    <button class="stab"><svg width="16" height="16" viewBox="0 0 16 16"><path d="M2.500 .5h7l4 4v9h-11z" fill="#fff" stroke="#c5cedb"/><text x="0" y="15" font-family="Liberation Sans" font-weight="700" font-size="10" fill="#ee9166">BG</text></svg><span>Background</span></button>
    <button class="stab"><svg width="16" height="16" viewBox="0 0 16 16"><path d="M1 1h5v5H1z" fill="#31a0dd" stroke="#1672a8"/><path d="M9.500 1.500h4v4h-4zM1.500 9.500h4v4h-4zM9.500 9.500h4v4h-4z" fill="#ccc" stroke="#555" stroke-width="1.500"/><path d="M7 4v9l2-2 2 4 1.500-1-2-3h3z" fill="#fff" stroke="#333" stroke-width=".7"/></svg><span>Filtro e Ricerca</span></button>
    <button class="stab"><svg width="14" height="16" viewBox="0 0 14 16"><path d="M1 .5h9l3 3v12H1z" fill="#fff" stroke="#999"/><path d="M3 6.500h8M3 9.500h8M3 12.500h8M5.500 4v9M8.500 4v9" stroke="#777"/></svg><span>Armature</span></button>
    <button class="stab"><svg width="16" height="16" viewBox="0 0 16 16"><path d="M1.500 6.500h3v8h-3zM6.500 1.500h3v13h-3zM11.500 4.500h3v10h-3z" fill="#e9eaec" stroke="#777"/><path d="M4.500 7v7M9.500 3v11" stroke="#444" stroke-width="1.500"/></svg><span>Risultati</span></button>
    <button class="stab border-bottom-0"><svg width="16" height="16" viewBox="0 0 16 16"><path d="M7 1h8.500v4H7z" fill="#cfe9fb" stroke="#456"/><path d="M7 5h6l-6 6z" fill="#ffe04a" stroke="#665"/><path d="M1 1h5.500v14H1z" fill="#7ed321" stroke="#2e6b12"/></svg><span>Collegam</span></button>
    <div class="d-flex flex-column align-items-center gap-3">
      <svg width="8" height="4" viewBox="0 0 8 4"><path d="M0 4h8L4 0z" fill="#aab7cc"/></svg>
      <svg width="8" height="5" viewBox="0 0 8 5"><path d="M0 0h8L4 5z" fill="#5f7196"/></svg>
    </div>
  </nav>
</main>

<footer class="status d-flex align-items-center">
  <span class="flex-grow-1">Placcaggi FRP per Flessione</span>
  <div class="cell cell-mode fw-bold"><svg width="12" height="12" viewBox="0 0 12 12" class="me-1"><path d="M1 1h6l3 3v7H1z" fill="#fff" stroke="#555"/><path d="M2 3h3v3H2z" fill="#4b8fd0"/><path d="M4 12l1-5 4-1 3 3v3z" fill="#8a7a66"/></svg>Cemento Armato (Armature)</div>
  <div class="cell cell-pos">X: -1.78 - Y: 3.89 - Z: 0.00</div>
  <div class="cell cell-x"></div>
  <div class="cell cell-x"></div>
  <div class="cell cell-grip justify-content-end pe-1"><svg width="11" height="11" viewBox="0 0 11 11"><path d="M8 0h2v2H8zM4 4h2v2H4zM8 4h2v2H8zM0 8h2v2H0zM4 8h2v2H4zM8 8h2v2H8z" fill="#8296bb"/></svg></div>
</footer>
</body>
</html>
